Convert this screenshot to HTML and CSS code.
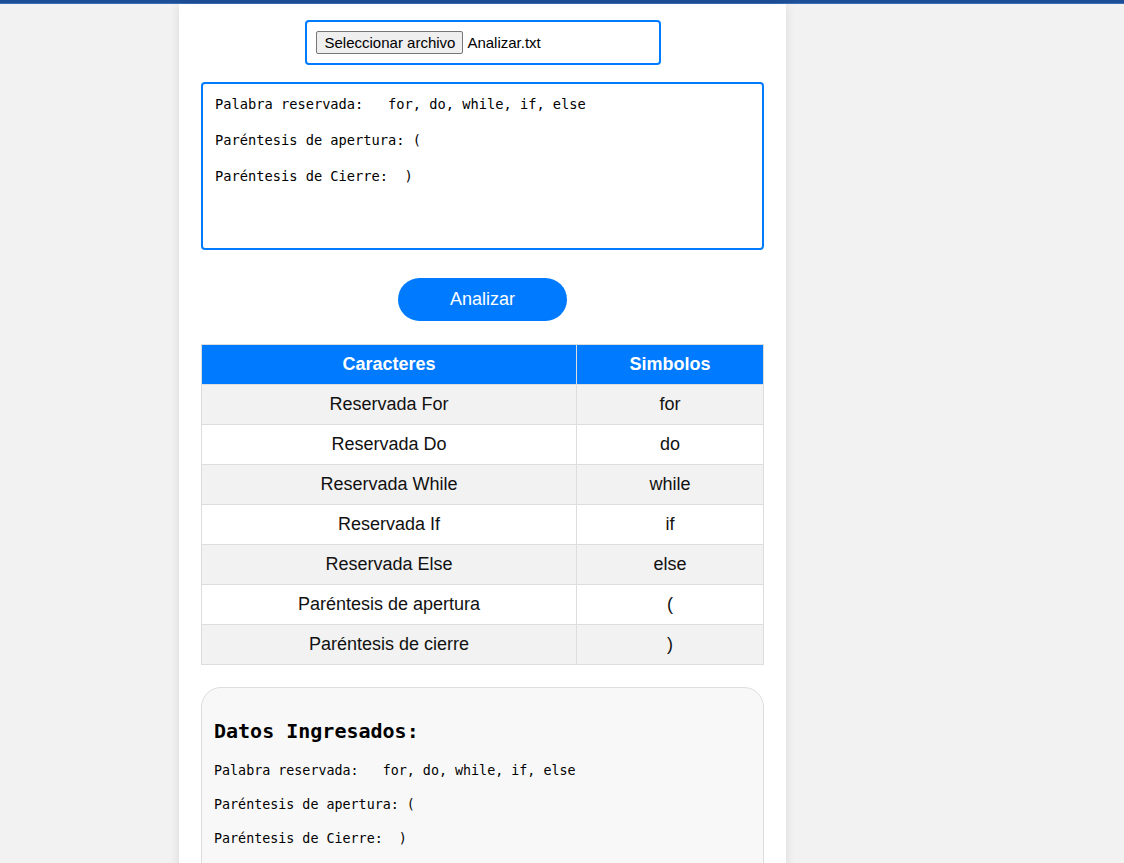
FILE: index.html
```html
<!DOCTYPE html>
<html lang="es">
<head>
<meta charset="utf-8">
<title>Analizador</title>
<link rel="stylesheet" href="styles.css">
</head>
<body>
<div class="topbar"></div>
<div class="page">
  <main class="container">
    <div class="file-box">
      <button class="file-btn" type="button">Seleccionar archivo</button>
      <span class="file-name">Analizar.txt</span>
    </div>
    <textarea class="code-input" spellcheck="false">Palabra reservada:   for, do, while, if, else

Paréntesis de apertura: (

Paréntesis de Cierre:  )</textarea>
    <div class="actions">
      <button class="analyze-btn" type="button">Analizar</button>
    </div>
    <table class="results">
      <thead>
        <tr><th class="col-a">Caracteres</th><th>Simbolos</th></tr>
      </thead>
      <tbody>
        <tr><td>Reservada For</td><td>for</td></tr>
        <tr><td>Reservada Do</td><td>do</td></tr>
        <tr><td>Reservada While</td><td>while</td></tr>
        <tr><td>Reservada If</td><td>if</td></tr>
        <tr><td>Reservada Else</td><td>else</td></tr>
        <tr><td>Paréntesis de apertura</td><td>(</td></tr>
        <tr><td>Paréntesis de cierre</td><td>)</td></tr>
      </tbody>
    </table>
    <section class="datos">
      <h2 class="datos-title">Datos Ingresados:</h2>
      <p class="datos-line">Palabra reservada:&nbsp;&nbsp; for, do, while, if, else</p>
      <p class="datos-line">Paréntesis de apertura: (</p>
      <p class="datos-line">Paréntesis de Cierre:&nbsp; )</p>
    </section>
  </main>
</div>
</body>
</html>
```

FILE: styles.css
```css
html, body {
  margin: 0;
  padding: 0;
  background: #f2f2f2;
  font-family: "Liberation Sans", Arial, sans-serif;
  color: #111;
  height: 100%;
  overflow: hidden;
}

.topbar {
  height: 4px;
  background: linear-gradient(#1d4f98 0, #1d4f98 3px, #3d6db5 3px, #3d6db5 4px);
}

.page {
  display: flex;
  justify-content: flex-start;
  padding-left: 179px;
}

.container {
  width: 607px;
  box-sizing: border-box;
  background: #fff;
  padding: 16px 22px 40px;
  box-shadow: 0 0 10px rgba(0, 0, 0, 0.1);
  display: flex;
  flex-direction: column;
  min-height: 1000px;
}

.file-box {
  align-self: center;
  width: 356px;
  height: 45px;
  box-sizing: border-box;
  border: 2px solid #007bff;
  border-radius: 4px;
  padding: 9px;
  display: flex;
  align-items: flex-start;
  gap: 4px;
  font-size: 15px;
}

.file-btn {
  font-family: "Liberation Sans", Arial, sans-serif;
  font-size: 15px;
  height: 23px;
  padding: 0 7px 0 8px;
  background: #efefef;
  border: 1px solid #767676;
  border-radius: 2px;
  color: #000;
  line-height: 21px;
}

.file-name {
  line-height: 23px;
  color: #000;
}

.code-input {
  margin-top: 17px;
  width: 100%;
  height: 168px;
  box-sizing: border-box;
  border: 2px solid #007bff;
  border-radius: 4px;
  padding: 11px 12px;
  font-family: "DejaVu Sans Mono", monospace;
  font-size: 13.7px;
  line-height: 18px;
  resize: none;
  color: #000;
  outline: none;
  overflow: hidden;
}

.actions {
  display: flex;
  justify-content: center;
  margin-top: 28px;
}

.analyze-btn {
  width: 169px;
  height: 43px;
  border: none;
  border-radius: 22px;
  background: #007bff;
  color: #fff;
  font-family: "Liberation Sans", Arial, sans-serif;
  font-size: 18px;
}

.results {
  margin-top: 23px;
  width: 100%;
  border-collapse: collapse;
  font-size: 18px;
}

.results th,
.results td {
  border: 1px solid #ddd;
  height: 40px;
  box-sizing: border-box;
  padding: 0 8px;
  text-align: center;
}

.results th {
  background: #007bff;
  color: #fff;
  font-weight: bold;
}

.results .col-a {
  width: 375px;
}

.results tbody tr:nth-child(odd) {
  background: #f2f2f2;
}

.results tbody tr:nth-child(even) {
  background: #fff;
}

.datos {
  margin-top: 22px;
  background: #f8f8f8;
  border: 1px solid #ddd;
  border-radius: 20px;
  padding: 0 12px 20px;
  font-family: "DejaVu Sans Mono", monospace;
  color: #000;
}

.datos-title {
  margin: 31px 0 19px;
  font-size: 20px;
  line-height: 24px;
  font-weight: bold;
}

.datos-line {
  margin: 16px 0;
  font-size: 13.35px;
  line-height: 18px;
  white-space: pre;
}
```
